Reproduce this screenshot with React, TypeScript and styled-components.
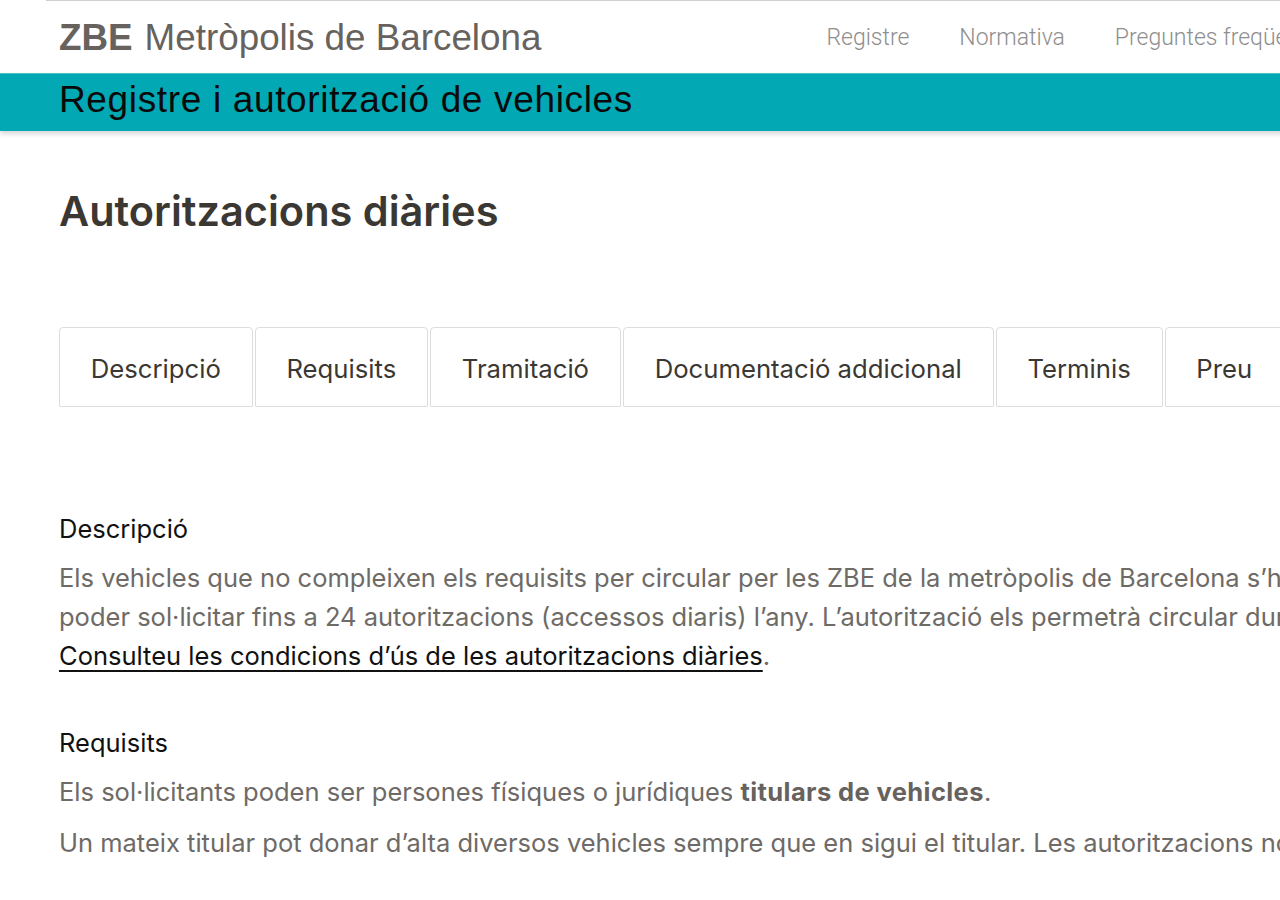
import React from "react";
import styled, { createGlobalStyle } from "styled-components";

const GlobalStyle = createGlobalStyle`
  html, body {
    margin: 0;
    padding: 0;
    background: #ffffff;
    overflow: hidden;
  }
  body {
    font-family: Inter, "Noto Sans", sans-serif;
  }
  * { box-sizing: border-box; }
`;

const Page = styled.div`
  width: 1400px;
  min-height: 900px;
  background: #ffffff;
`;

const TopRule = styled.div`
  height: 1px;
  margin-left: 46px;
  background: #cfcfcf;
`;

const Header = styled.header`
  height: 72px;
  display: flex;
  align-items: center;
  padding: 0 59px;
`;

const Logo = styled.div`
  font-family: "Liberation Sans", Arial, sans-serif;
  font-size: 36.8px;
  color: #67625d;
  white-space: nowrap;
  display: flex;
  align-items: baseline;
  gap: 12px;
  margin-top: 1px;
`;

const LogoBold = styled.span`
  font-weight: 700;
`;

const Nav = styled.nav`
  display: flex;
  gap: 50px;
  margin-left: 285px;
  margin-top: 1px;
`;

const NavLink = styled.a`
  font-family: Roboto, "Liberation Sans", sans-serif;
  font-weight: 300;
  font-size: 23px;
  color: #8e8e8e;
  text-decoration: none;
  white-space: nowrap;
`;

const Band = styled.div`
  height: 58px;
  background: #02a8b4;
  border-top: 1px solid #4cc2c9;
  box-shadow: 0 3px 5px rgba(0, 0, 0, 0.16);
  padding: 0 59px 5px;
  display: flex;
  align-items: center;
`;

const BandTitle = styled.h2`
  margin: 0;
  font-family: "Liberation Sans", Arial, sans-serif;
  font-weight: 400;
  font-size: 37px;
  letter-spacing: 0.65px;
  color: #0a0a0a;
  white-space: nowrap;
`;

const Main = styled.main`
  padding: 0 59px;
`;

const Title = styled.h1`
  margin: 55px 0 0;
  font-family: Inter, sans-serif;
  font-weight: 600;
  font-size: 41.5px;
  line-height: 50px;
  color: #3b3733;
`;

const Tabs = styled.div`
  margin-top: 91px;
  display: flex;
  gap: 2px;
`;

const Tab = styled.button`
  height: 80px;
  padding: 2px 30.8px 0;
  border: 1px solid #dddddd;
  border-radius: 4px 4px 1px 1px;
  background: #ffffff;
  font-family: Inter, sans-serif;
  font-size: 25.7px;
  font-weight: 400;
  color: #3b3733;
  white-space: nowrap;
  cursor: pointer;
`;

const Section = styled.section<{ $gap: number }>`
  margin-top: ${(p) => p.$gap}px;
`;

const SectionTitle = styled.h3`
  margin: 0;
  font-family: Inter, sans-serif;
  font-weight: 400;
  font-size: 25.5px;
  line-height: 39px;
  color: #111111;
`;

const Para = styled.p`
  margin: 10px 0 0;
  font-family: Inter, sans-serif;
  font-weight: 400;
  font-size: 25.5px;
  line-height: 39px;
  color: #6e6a66;
  white-space: nowrap;

  & + & {
    margin-top: 12px;
  }

  strong {
    font-weight: 700;
    letter-spacing: 0.4px;
    color: #67625d;
  }
`;

const Link = styled.a`
  color: #111111;
  text-decoration: underline;
  text-decoration-thickness: 1.5px;
  text-underline-offset: 5px;
`;

const tabs = [
  "Descripció",
  "Requisits",
  "Tramitació",
  "Documentació addicional",
  "Terminis",
  "Preu",
];

export default function App() {
  return (
    <>
      <GlobalStyle />
      <Page>
        <TopRule />
        <Header>
          <Logo>
            <LogoBold>ZBE</LogoBold>
            <span>Metròpolis de Barcelona</span>
          </Logo>
          <Nav>
            <NavLink href="#">Registre</NavLink>
            <NavLink href="#">Normativa</NavLink>
            <NavLink href="#">Preguntes freqüents</NavLink>
          </Nav>
        </Header>
        <Band>
          <BandTitle>Registre i autorització de vehicles</BandTitle>
        </Band>
        <Main>
          <Title>Autoritzacions diàries</Title>
          <Tabs>
            {tabs.map((t) => (
              <Tab key={t}>{t}</Tab>
            ))}
          </Tabs>
          <Section $gap={102}>
            <SectionTitle>Descripció</SectionTitle>
            <Para>
              Els vehicles que no compleixen els requisits per circular per les ZBE de la metròpolis de Barcelona s’hauran de registrar per
              <br />
              poder sol·licitar fins a 24 autoritzacions (accessos diaris) l’any. L’autorització els permetrà circular durant tot el dia.
              <br />
              <Link href="#">Consulteu les condicions d’ús de les autoritzacions diàries</Link>.
            </Para>
          </Section>
          <Section $gap={48}>
            <SectionTitle>Requisits</SectionTitle>
            <Para>
              Els sol·licitants poden ser persones físiques o jurídiques <strong>titulars de vehicles</strong>.
            </Para>
            <Para>
              Un mateix titular pot donar d’alta diversos vehicles sempre que en sigui el titular. Les autoritzacions no són transferibles.
            </Para>
          </Section>
        </Main>
      </Page>
    </>
  );
}
